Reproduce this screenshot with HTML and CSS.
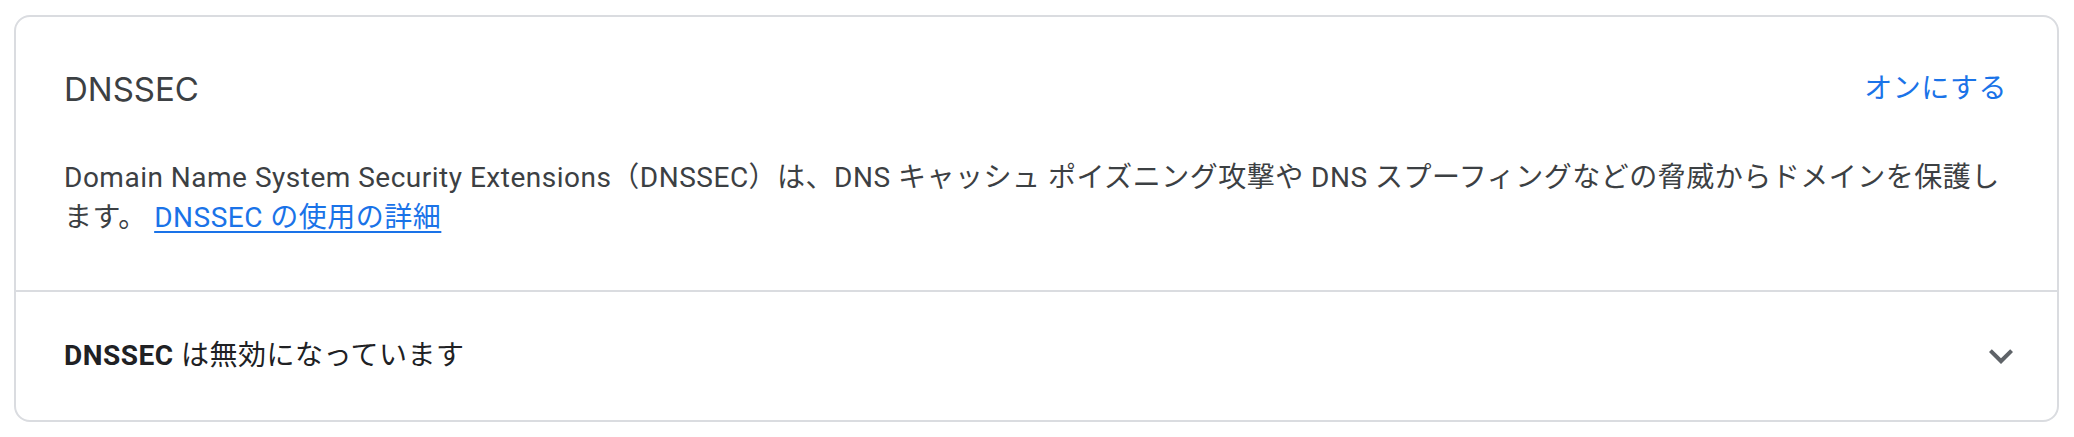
FILE: index.html
```html
<!DOCTYPE html>
<html lang="ja">
<head>
<meta charset="utf-8">
<title>DNSSEC</title>
<link rel="stylesheet" href="styles.css">
</head>
<body>
  <section class="card">
    <div class="card-header">
      <h2 class="card-title">DNSSEC</h2>
      <a class="action-button" href="#">オンにする</a>
    </div>
    <p class="card-desc">Domain Name System Security Extensions（DNSSEC）は、DNS キャッシュ ポイズニング攻撃や DNS スプーフィングなどの脅威からドメインを保護します。 <a class="desc-link" href="#">DNSSEC の使用の詳細</a></p>
    <div class="status-row">
      <div class="status-text"><span class="status-strong">DNSSEC</span> は無効になっています</div>
      <span class="expand-icon" aria-hidden="true">
        <svg viewBox="0 0 24 24" width="48" height="48"><path d="M16.59 8.59L12 13.17 7.41 8.59 6 10l6 6 6-6z" fill="#5f6368"/></svg>
      </span>
    </div>
  </section>
</body>
</html>
```

FILE: styles.css
```css
html, body {
  background: #ffffff;
}
body {
  margin: 15px 15px 0 14px;
  font-family: Roboto, "Noto Sans CJK JP", sans-serif;
  color: #3c4043;
}
.card {
  border: 2px solid #dadce0;
  border-radius: 16px;
  background: #ffffff;
}
.card-header {
  display: flex;
  align-items: center;
  justify-content: space-between;
  padding: 48px 50px 0 48px;
}
.card-title {
  margin: 0;
  font-family: Inter, Roboto, sans-serif;
  font-weight: 400;
  font-size: 33px;
  line-height: 48px;
  color: #3c4043;
}
.action-button {
  font-family: Roboto, "Noto Sans CJK JP", sans-serif;
  font-size: 28px;
  line-height: 48px;
  letter-spacing: 0.5px;
  color: #1a73e8;
  text-decoration: none;
}
.card-desc {
  margin: 0;
  padding: 45px 48px 52px 48px;
  font-size: 28px;
  line-height: 40px;
  letter-spacing: 0.5px;
  color: #3c4043;
  border-bottom: 2px solid #dadce0;
}
.desc-link {
  color: #1a73e8;
  text-decoration: underline;
  text-underline-offset: 4px;
  text-decoration-thickness: 2px;
}
.status-row {
  display: flex;
  align-items: center;
  justify-content: space-between;
  height: 128px;
  padding: 0 32px 0 48px;
}
.status-text {
  font-size: 28px;
  line-height: 40px;
  letter-spacing: 0.5px;
  color: #202124;
}
.status-strong {
  font-weight: 700;
}
.expand-icon {
  display: flex;
  width: 48px;
  height: 48px;
}
```
